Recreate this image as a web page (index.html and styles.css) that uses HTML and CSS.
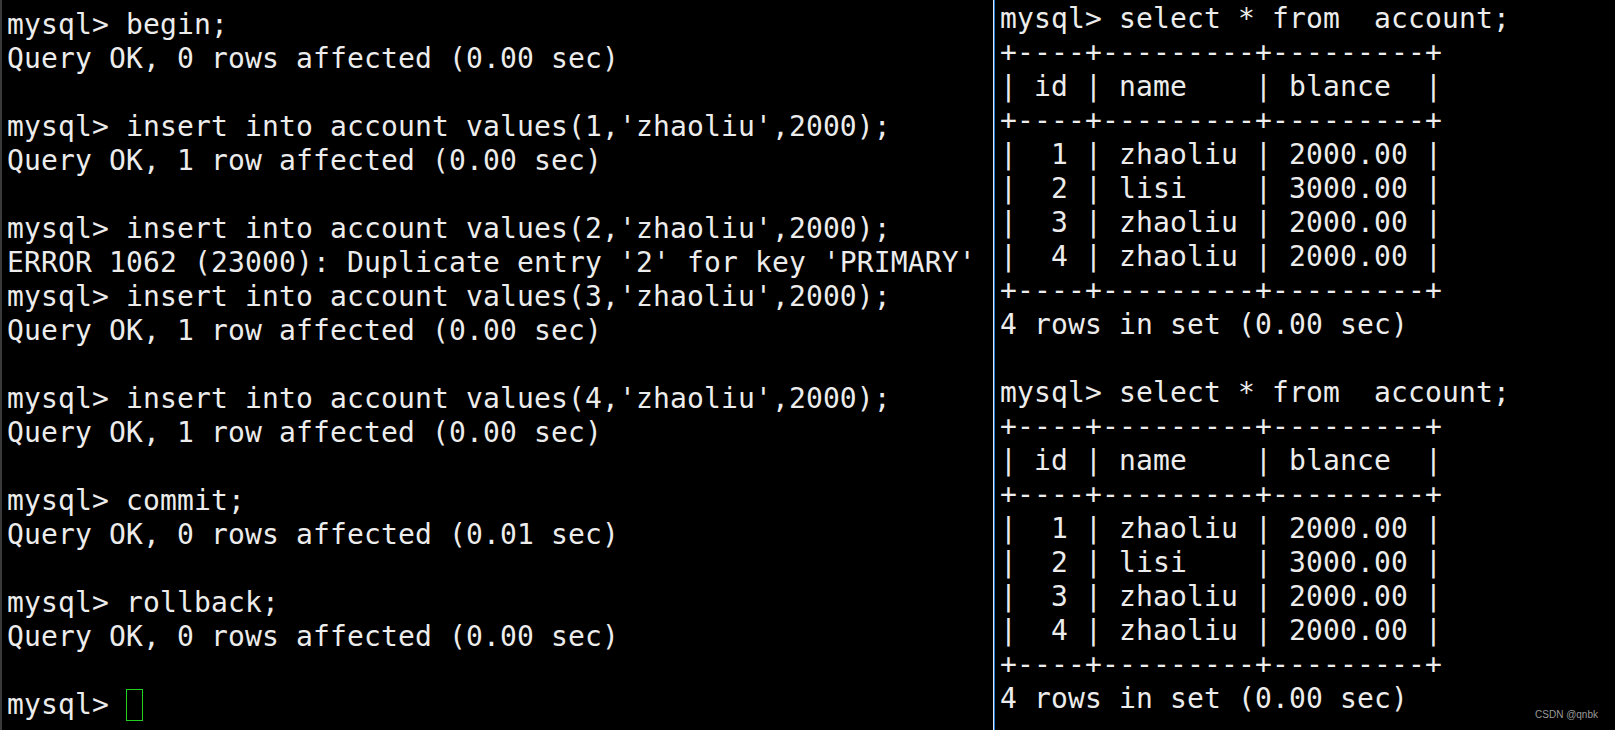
FILE: index.html
```html
<!DOCTYPE html>
<html lang="en">
<head>
<meta charset="utf-8">
<title>mysql terminal</title>
<link rel="stylesheet" href="styles.css">
</head>
<body>
<div class="screen">
<section class="pane pane-left">
<pre class="term">mysql&gt; begin;
Query OK, 0 rows affected (0.00 sec)

mysql&gt; insert into account values(1,'zhaoliu',2000);
Query OK, 1 row affected (0.00 sec)

mysql&gt; insert into account values(2,'zhaoliu',2000);
ERROR 1062 (23000): Duplicate entry '2' for key 'PRIMARY'
mysql&gt; insert into account values(3,'zhaoliu',2000);
Query OK, 1 row affected (0.00 sec)

mysql&gt; insert into account values(4,'zhaoliu',2000);
Query OK, 1 row affected (0.00 sec)

mysql&gt; commit;
Query OK, 0 rows affected (0.01 sec)

mysql&gt; rollback;
Query OK, 0 rows affected (0.00 sec)

mysql&gt; <span class="cursor"></span></pre>
</section>
<div class="divider"></div>
<section class="pane pane-right">
<pre class="term">mysql&gt; select * from  account;
+----+---------+---------+
| id | name    | blance  |
+----+---------+---------+
|  1 | zhaoliu | 2000.00 |
|  2 | lisi    | 3000.00 |
|  3 | zhaoliu | 2000.00 |
|  4 | zhaoliu | 2000.00 |
+----+---------+---------+
4 rows in set (0.00 sec)

mysql&gt; select * from  account;
+----+---------+---------+
| id | name    | blance  |
+----+---------+---------+
|  1 | zhaoliu | 2000.00 |
|  2 | lisi    | 3000.00 |
|  3 | zhaoliu | 2000.00 |
|  4 | zhaoliu | 2000.00 |
+----+---------+---------+
4 rows in set (0.00 sec)</pre>
</section>
<div class="watermark">CSDN @qnbk</div>
</div>
</body>
</html>
```

FILE: styles.css
```css
html, body {
  margin: 0;
  padding: 0;
  background: #000;
}

.screen {
  position: relative;
  display: flex;
  width: 1615px;
  height: 730px;
  overflow: hidden;
  background: #000;
}

.pane {
  height: 100%;
  box-sizing: border-box;
}

.pane-left {
  width: 993px;
  flex: 0 0 993px;
  border-left: 2px solid #3a3a3a;
  padding: 8px 0 0 5px;
}

.divider {
  flex: 0 0 2px;
  width: 2px;
  height: 100%;
  border-left: 1px solid #dfe8f4;
  background: #1f78d1;
  box-sizing: border-box;
}

.pane-right {
  flex: 1 1 auto;
  padding: 2px 0 0 5px;
}

.term {
  margin: 0;
  font-family: "DejaVu Sans Mono", monospace;
  font-size: 28px;
  line-height: 34px;
  letter-spacing: 0.14px;
  color: #ececec;
  white-space: pre;
}

.cursor {
  display: inline-block;
  width: 17px;
  height: 32px;
  margin-top: 1px;
  border: 1px solid #22d022;
  box-sizing: border-box;
  vertical-align: top;
}

.watermark {
  position: absolute;
  right: 17px;
  bottom: 10px;
  font-family: "Liberation Sans", Arial, sans-serif;
  font-size: 10px;
  color: #9a9a9a;
}
```
